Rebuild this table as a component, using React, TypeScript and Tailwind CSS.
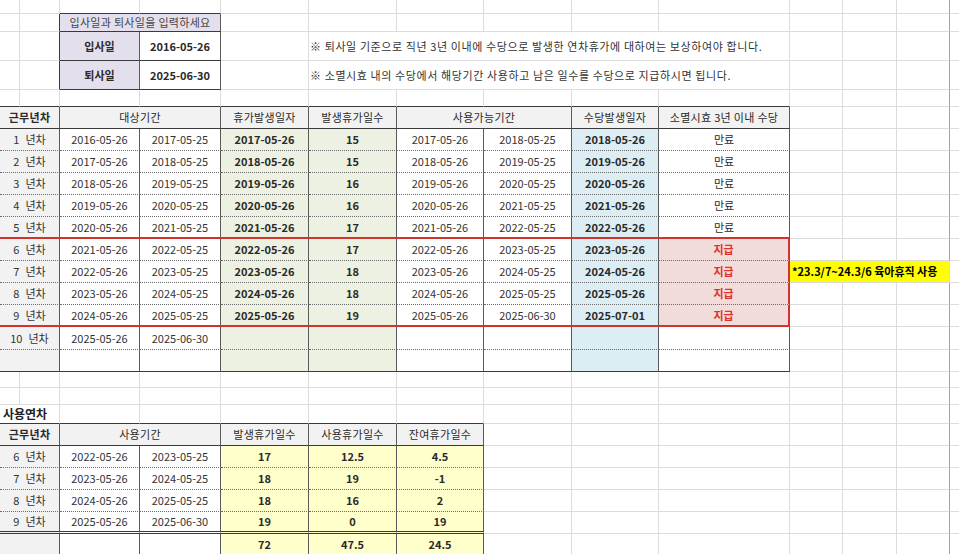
import React from 'react';
import { twMerge } from 'tailwind-merge';

// one sheet row: A..N columns, widths taken from the sheet
const ROW =
  'grid grid-cols-[20px_40px_80px_81px_88px_88px_87px_88px_87px_131px_53px_54px_53px_1fr]';

const SPAN: Record<number, string> = {
  1: 'col-span-1',
  2: 'col-span-2',
  3: 'col-span-3',
  5: 'col-span-5',
};

const V = 'border-r-[#5a5a5a]';
const DOT = 'border-b-[#6b6b6b] [border-bottom-style:dotted]';
const SOLID = 'border-b-[#3a3a3a]';
const RED_B = 'border-b-2 border-b-[#d0342c]';
const RED_R = 'border-r-2 border-r-[#d0342c]';

function Cell({
  span = 1,
  className,
  children,
}: {
  span?: number;
  className?: string;
  children?: React.ReactNode;
}) {
  return (
    <div
      className={twMerge(
        'flex min-w-0 items-center justify-center whitespace-nowrap border-r border-b border-r-[#dcdcdc] border-b-[#dcdcdc]',
        SPAN[span],
        className
      )}
    >
      {children}
    </div>
  );
}

// empty gridline cells from column index `from` to the end (N)
function tail(from: number, bottom = '') {
  const cells = [];
  for (let i = from; i <= 13; i++) {
    cells.push(
      <Cell
        key={i}
        className={twMerge(
          i === 12 ? 'border-r-[#a3a3a3]' : '',
          i === 13 ? 'border-r-0' : '',
          bottom
        )}
      />
    );
  }
  return cells;
}

function Year({ n }: { n: number | string }) {
  return (
    <>
      <span>{n}</span>
      <span className="ml-[6px]">년차</span>
    </>
  );
}

const YEARS = [
  [1, '2016-05-26', '2017-05-25', '2017-05-26', 15, '2017-05-26', '2018-05-25', '2018-05-26'],
  [2, '2017-05-26', '2018-05-25', '2018-05-26', 15, '2018-05-26', '2019-05-25', '2019-05-26'],
  [3, '2018-05-26', '2019-05-25', '2019-05-26', 16, '2019-05-26', '2020-05-25', '2020-05-26'],
  [4, '2019-05-26', '2020-05-25', '2020-05-26', 16, '2020-05-26', '2021-05-25', '2021-05-26'],
  [5, '2020-05-26', '2021-05-25', '2021-05-26', 17, '2021-05-26', '2022-05-25', '2022-05-26'],
  [6, '2021-05-26', '2022-05-25', '2022-05-26', 17, '2022-05-26', '2023-05-25', '2023-05-26'],
  [7, '2022-05-26', '2023-05-25', '2023-05-26', 18, '2023-05-26', '2024-05-25', '2024-05-26'],
  [8, '2023-05-26', '2024-05-25', '2024-05-26', 18, '2024-05-26', '2025-05-25', '2025-05-26'],
  [9, '2024-05-26', '2025-05-25', '2025-05-26', 19, '2025-05-26', '2025-06-30', '2025-07-01'],
];

const UNUSED = [
  [6, '2022-05-26', '2023-05-25', 17, 12.5, 4.5],
  [7, '2023-05-26', '2024-05-25', 18, 19, -1],
  [8, '2024-05-26', '2025-05-25', 18, 16, 2],
  [9, '2025-05-26', '2025-06-30', 19, 0, 19],
];

export default function App() {
  return (
    <div className="h-[554px] w-[959px] overflow-hidden bg-white font-['Noto_Sans_CJK_KR',sans-serif] text-[11px] text-[#2a2a2a]">
      {/* input box */}
      <div className={`${ROW} h-[14px]`}>
        {tail(0, '').map((c, i) =>
          i === 2 || i === 3 ? (
            <Cell key={i} className={SOLID} />
          ) : (
            c
          )
        )}
      </div>
      <div className={`${ROW} h-[18px]`}>
        <Cell />
        <Cell className="border-r-[#3a3a3a]" />
        <Cell span={2} className={`${V} ${SOLID} bg-[#e4dfec] tracking-[0.3px] text-[#444]`}>
          입사일과 퇴사일을 입력하세요
        </Cell>
        {tail(4)}
      </div>
      <div className={`${ROW} h-[29px]`}>
        <Cell />
        <Cell className="border-r-[#3a3a3a]" />
        <Cell className={`${V} ${SOLID} bg-[#e4dfec] font-bold`}>입사일</Cell>
        <Cell className={`${V} ${SOLID} font-bold`}>2016-05-26</Cell>
        <Cell />
        <Cell span={5} className="justify-start pl-[1px] tracking-[0.6px] text-[#333]">
          ※ 퇴사일 기준으로 직년 3년 이내에 수당으로 발생한 연차휴가에 대하여는 보상하여야 합니다.
        </Cell>
        {tail(10)}
      </div>
      <div className={`${ROW} h-[29px]`}>
        <Cell />
        <Cell className="border-r-[#3a3a3a]" />
        <Cell className={`${V} ${SOLID} bg-[#e4dfec] font-bold`}>퇴사일</Cell>
        <Cell className={`${V} ${SOLID} font-bold`}>2025-06-30</Cell>
        <Cell />
        <Cell span={5} className="justify-start pl-[1px] tracking-[0.6px] text-[#333]">
          ※ 소멸시효 내의 수당에서 해당기간 사용하고 남은 일수를 수당으로 지급하시면 됩니다.
        </Cell>
        {tail(10)}
      </div>
      <div className={`${ROW} h-[17px]`}>
        {tail(0).map((c, i) => (i <= 9 ? <Cell key={i} className={SOLID} /> : c))}
      </div>

      {/* main table */}
      <div className={`${ROW} h-[22px] bg-white tracking-[0.3px]`}>
        <Cell span={2} className={`${V} ${SOLID} bg-[#f2f2f2] font-bold`}>근무년차</Cell>
        <Cell span={2} className={`${V} ${SOLID} bg-[#f2f2f2]`}>대상기간</Cell>
        <Cell className={`${V} ${SOLID} bg-[#f2f2f2]`}>휴가발생일자</Cell>
        <Cell className={`${V} ${SOLID} bg-[#f2f2f2]`}>발생휴가일수</Cell>
        <Cell span={2} className={`${V} ${SOLID} bg-[#f2f2f2]`}>사용가능기간</Cell>
        <Cell className={`${V} ${SOLID} bg-[#f2f2f2]`}>수당발생일자</Cell>
        <Cell className={`${V} ${SOLID} bg-[#f2f2f2]`}>소멸시효 3년 이내 수당</Cell>
        {tail(10)}
      </div>
      {YEARS.map((y) => {
        const n = y[0] as number;
        const paid = n >= 6;
        const b = n === 5 || n === 9 ? RED_B : DOT;
        return (
          <div key={n} className={`${ROW} h-[22px]`}>
            <Cell span={2} className={`${V} ${b} bg-[#f2f2f2] text-[#333]`}>
              <Year n={n} />
            </Cell>
            <Cell className={`${V} ${b} text-[#333]`}>{y[1]}</Cell>
            <Cell className={`${V} ${b} text-[#333]`}>{y[2]}</Cell>
            <Cell className={`${V} ${b} bg-[#edf1e1] font-bold`}>{y[3]}</Cell>
            <Cell className={`${V} ${b} bg-[#edf1e1] font-bold`}>{y[4]}</Cell>
            <Cell className={`${V} ${b} text-[#333]`}>{y[5]}</Cell>
            <Cell className={`${V} ${b} text-[#333]`}>{y[6]}</Cell>
            <Cell className={`${V} ${b} bg-[#dcedf3] font-bold`}>{y[7]}</Cell>
            {paid ? (
              <Cell className={`${RED_R} ${b} bg-[#f2dcdb] font-bold text-[#e0312b]`}>지급</Cell>
            ) : (
              <Cell className={`${V} ${b}`}>만료</Cell>
            )}
            {n === 7 ? (
              <>
                <Cell span={3} className="justify-start bg-[#ffff00] pl-[2px] font-bold text-black">
                  *23.3/7~24.3/6 육아휴직 사용
                </Cell>
                {tail(13)}
              </>
            ) : (
              tail(10)
            )}
          </div>
        );
      })}
      <div className={`${ROW} h-[23px]`}>
        <Cell span={2} className={`${V} ${DOT} bg-[#f2f2f2] text-[#333]`}>
          <Year n={10} />
        </Cell>
        <Cell className={`${V} ${DOT} text-[#333]`}>2025-05-26</Cell>
        <Cell className={`${V} ${DOT} text-[#333]`}>2025-06-30</Cell>
        <Cell className={`${V} ${DOT} bg-[#edf1e1]`} />
        <Cell className={`${V} ${DOT} bg-[#edf1e1]`} />
        <Cell className={`${V} ${DOT}`} />
        <Cell className={`${V} ${DOT}`} />
        <Cell className={`${V} ${DOT} bg-[#dcedf3]`} />
        <Cell className={`${V} ${DOT}`} />
        {tail(10)}
      </div>
      <div className={`${ROW} h-[22px]`}>
        <Cell span={2} className={`${V} ${SOLID} bg-[#f2f2f2]`} />
        <Cell className={`${V} ${SOLID}`} />
        <Cell className={`${V} ${SOLID}`} />
        <Cell className={`${V} ${SOLID} bg-[#edf1e1]`} />
        <Cell className={`${V} ${SOLID} bg-[#edf1e1]`} />
        <Cell className={`${V} ${SOLID}`} />
        <Cell className={`${V} ${SOLID}`} />
        <Cell className={`${V} ${SOLID} bg-[#dcedf3]`} />
        <Cell className={`${V} ${SOLID}`} />
        {tail(10)}
      </div>

      {/* gap rows */}
      <div className={`${ROW} h-[16px]`}>{tail(0)}</div>
      <div className={`${ROW} h-[17px]`}>{tail(0)}</div>
      <div className={`${ROW} h-[19px]`}>
        <Cell span={2} className={`${SOLID} justify-start border-r-[#dcdcdc] pl-[3px] font-bold text-[12px] text-[#222]`}>
          사용연차
        </Cell>
        {tail(2).map((c, i) => (i <= 4 ? <Cell key={i} className={SOLID} /> : c))}
      </div>

      {/* unused leave table */}
      <div className={`${ROW} h-[22px] tracking-[0.3px]`}>
        <Cell span={2} className={`${V} ${SOLID} bg-[#f2f2f2] font-bold`}>근무년차</Cell>
        <Cell span={2} className={`${V} ${SOLID} bg-[#f2f2f2]`}>사용기간</Cell>
        <Cell className={`${V} ${SOLID} bg-[#f2f2f2]`}>발생휴가일수</Cell>
        <Cell className={`${V} ${SOLID} bg-[#f2f2f2]`}>사용휴가일수</Cell>
        <Cell className={`${V} ${SOLID} bg-[#f2f2f2]`}>잔여휴가일수</Cell>
        {tail(7)}
      </div>
      {UNUSED.map((u, i) => {
        const b = i === UNUSED.length - 1 ? 'border-b-[3px] border-b-[#3a3a3a] [border-bottom-style:double]' : DOT;
        return (
          <div key={i} className={`${ROW} h-[22px]`}>
            <Cell span={2} className={`${V} ${b} bg-[#f2f2f2] text-[#333]`}>
              <Year n={u[0]} />
            </Cell>
            <Cell className={`${V} ${b} text-[#333]`}>{u[1]}</Cell>
            <Cell className={`${V} ${b} text-[#333]`}>{u[2]}</Cell>
            <Cell className={`${V} ${b} bg-[#ffffcc] font-bold`}>{u[3]}</Cell>
            <Cell className={`${V} ${b} bg-[#ffffcc] font-bold`}>{u[4]}</Cell>
            <Cell className={`${V} ${b} bg-[#ffffcc] font-bold`}>{u[5]}</Cell>
            {tail(7)}
          </div>
        );
      })}
      <div className={`${ROW} h-[22px]`}>
        <Cell span={2} className={`${V} ${SOLID} bg-[#f2f2f2]`} />
        <Cell className={`${V} ${SOLID}`} />
        <Cell className={`${V} ${SOLID}`} />
        <Cell className={`${V} ${SOLID} bg-[#ffffcc] font-bold`}>72</Cell>
        <Cell className={`${V} ${SOLID} bg-[#ffffcc] font-bold`}>47.5</Cell>
        <Cell className={`${V} ${SOLID} bg-[#ffffcc] font-bold`}>24.5</Cell>
        {tail(7)}
      </div>
    </div>
  );
}
